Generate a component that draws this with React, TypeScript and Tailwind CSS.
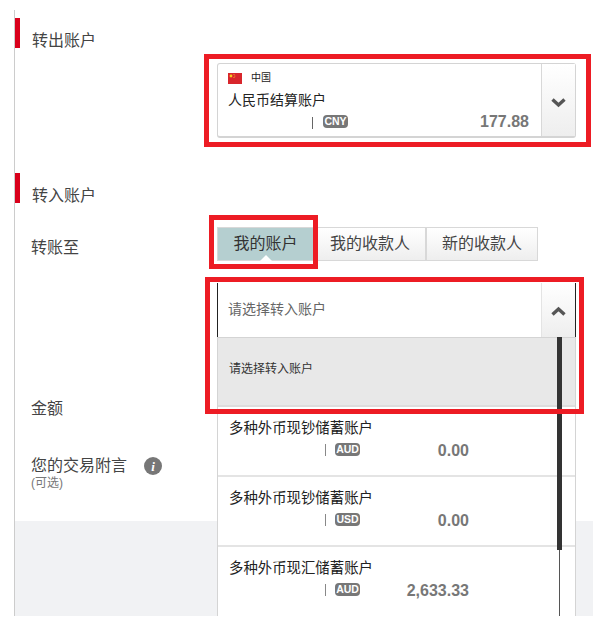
const cjk = { fontFamily: '"Liberation Sans", "Noto Sans CJK SC", sans-serif' };

function Heading({ children, className }: { children: string; className: string }) {
  return (
    <div className={`h-[30px] shrink-0 border-l-[5px] border-[#d9001b] pl-3 pt-[13px] text-base leading-5 text-[#444] ${className}`}>
      {children}
    </div>
  );
}

function Chevron({ up, className }: { up?: boolean; className: string }) {
  return (
    <svg width="15" height="11" viewBox="0 0 15 11" className={className}>
      <path
        d={up ? "M1.5 8.5 L7.5 3 L13.5 8.5" : "M1.5 2.5 L7.5 8 L13.5 2.5"}
        fill="none"
        stroke="#555"
        strokeWidth="3.4"
        strokeLinejoin="miter"
      />
    </svg>
  );
}

function Badge({ code }: { code: string }) {
  return (
    <span className="flex h-[13px] w-[25px] items-center justify-center rounded-[4px] bg-[#777] text-[10.5px] font-bold leading-none text-white">
      {code}
    </span>
  );
}

function AccountRow({ name, code, amount, border }: { name: string; code: string; amount: string; border?: boolean }) {
  return (
    <div className={`h-[70px] pl-[11px] pt-3 ${border ? "border-b-2 border-[#e4e4e4]" : ""}`}>
      <div className="text-[14.4px] leading-[18px] text-[#222]">{name}</div>
      <div className="mt-[5px] flex h-4 items-center">
        <span className="ml-[96px] h-[12px] w-px bg-[#888]" />
        <span className="mb-[2px] ml-[9px]">
          <Badge code={code} />
        </span>
        <span className="ml-auto mr-[106px] mt-px text-base font-bold leading-4 text-[#777]">{amount}</span>
      </div>
    </div>
  );
}

function Tab({ label }: { label: string }) {
  return (
    <button className="flex h-[34px] w-[112px] items-center justify-center border border-[#d8d8d8] bg-gradient-to-b from-white to-[#eeeeee] text-base text-[#444]">
      {label}
    </button>
  );
}

export default function App() {
  return (
    <div className="h-[632px] w-[599px] bg-white pt-[10px]" style={cjk}>
      <main className="ml-[14px] flex h-[606px] w-[579px] flex-col overflow-hidden border-l border-[#cccccc]">
        <Heading className="mt-2">转出账户</Heading>

        {/* source account */}
        <div className="relative ml-[202px] mt-[15px] flex h-[75px] w-[359px] shrink-0 rounded-[3px] border border-b-2 border-[#d4d4d4]">
          <div className="flex-1 pl-[10px] pt-2">
            <div className="flex items-center">
              <svg width="14" height="11" viewBox="0 0 14 11">
                <rect width="14" height="11" fill="#d8262c" />
                <circle cx="3" cy="3" r="1.4" fill="#f5d020" />
                <circle cx="6" cy="1.5" r="0.5" fill="#f5d020" />
                <circle cx="6.8" cy="3" r="0.5" fill="#f5d020" />
                <circle cx="6" cy="4.5" r="0.5" fill="#f5d020" />
              </svg>
              <span className="ml-[9px] text-[10px] leading-3 text-[#222]">中国</span>
            </div>
            <div className="mt-[7px] text-sm leading-[18px] text-[#222]">人民币结算账户</div>
            <div className="mt-[5px] flex h-[15px] items-center">
              <span className="ml-[84px] mt-[2px] h-[12px] w-px bg-[#666]" />
              <span className="mb-px ml-[10px]">
                <Badge code="CNY" />
              </span>
              <span className="ml-auto mr-[12px] mt-px text-base font-bold leading-4 text-[#777]">177.88</span>
            </div>
          </div>
          <div className="flex w-[34px] items-center justify-center border-l border-[#d8d8d8] bg-gradient-to-b from-white to-[#eeeeee]">
            <Chevron className="mt-[5px]" />
          </div>
          <div className="pointer-events-none absolute -bottom-[11px] -left-[14px] -right-[16px] -top-[10px] border-[5px] border-[#ed1c24]" />
        </div>

        <Heading className="mt-[35px]">转入账户</Heading>

        <div className="flex flex-1">
          {/* labels */}
          <div className="w-[202px] pl-4 text-base leading-5 text-[#444]">
            <div className="mt-[35px]">转账至</div>
            <div className="mt-[141px]">金额</div>
            <div className="mt-[37px] flex items-center">
              您的交易附言
              <span
                className="ml-[17px] flex h-[18px] w-[18px] items-center justify-center rounded-full bg-[#777] text-[13px] font-bold italic leading-none text-white"
                style={{ fontFamily: '"Liberation Serif", serif' }}
              >
                i
              </span>
            </div>
            <div className="mt-px text-xs leading-3 text-[#777]">(可选)</div>
          </div>

          {/* transfer target */}
          <div className="relative z-10 w-[359px] pt-6">
            <div className="flex">
              <div className="relative">
                <button className="relative flex h-[34px] w-[97px] items-center justify-center border border-[#d8d8d8] bg-[#b5cfd0] text-base text-[#333]">
                  我的账户
                  <span className="absolute -bottom-px left-[42px] h-0 w-0 border-x-[6px] border-b-[6px] border-x-transparent border-b-white" />
                </button>
                <div className="pointer-events-none absolute -bottom-2 -left-2 -right-1 -top-3 border-[5px] border-[#ed1c24]" />
              </div>
              <Tab label="我的收款人" />
              <Tab label="新的收款人" />
            </div>

            <div className="relative mt-[22px]">
              <div className="flex h-[54px] border-x border-[#222]">
                <div className="flex flex-1 items-center pb-[2px] pl-[10px] text-sm text-[#666]">请选择转入账户</div>
                <div className="flex w-[34px] items-center justify-center border-l border-[#e4e4e4] bg-gradient-to-b from-white to-[#eeeeee]">
                  <Chevron up className="mt-[3px]" />
                </div>
              </div>
              {/* open list, lies over the footer */}
              <div className="absolute left-0 right-0 top-full border-x border-[#d4d4d4] bg-white">
                <div className="flex h-[70px] items-center border-y border-b-2 border-[#d4d4d4] border-b-[#dddddd] bg-[#e8e8e8] pb-[5px] pl-[11px] text-xs text-[#333]">
                  请选择转入账户
                </div>
                <AccountRow name="多种外币现钞储蓄账户" code="AUD" amount="0.00" border />
                <AccountRow name="多种外币现钞储蓄账户" code="USD" amount="0.00" border />
                <AccountRow name="多种外币现汇储蓄账户" code="AUD" amount="2,633.33" />
                {/* scrollbar */}
                <div className="absolute bottom-0 right-[15px] top-0 w-px bg-[#555]" />
                <div className="absolute right-[13px] top-0 h-[213px] w-[5px] bg-[#333]" />
              </div>
              <div className="pointer-events-none absolute -left-3 -right-2 -top-[6px] h-[137px] border-[5px] border-[#ed1c24]" />
            </div>
          </div>
        </div>

        {/* page footer behind the open list */}
        <div className="h-[95px] shrink-0 bg-[#f1f2f4]" />
      </main>
    </div>
  );
}
